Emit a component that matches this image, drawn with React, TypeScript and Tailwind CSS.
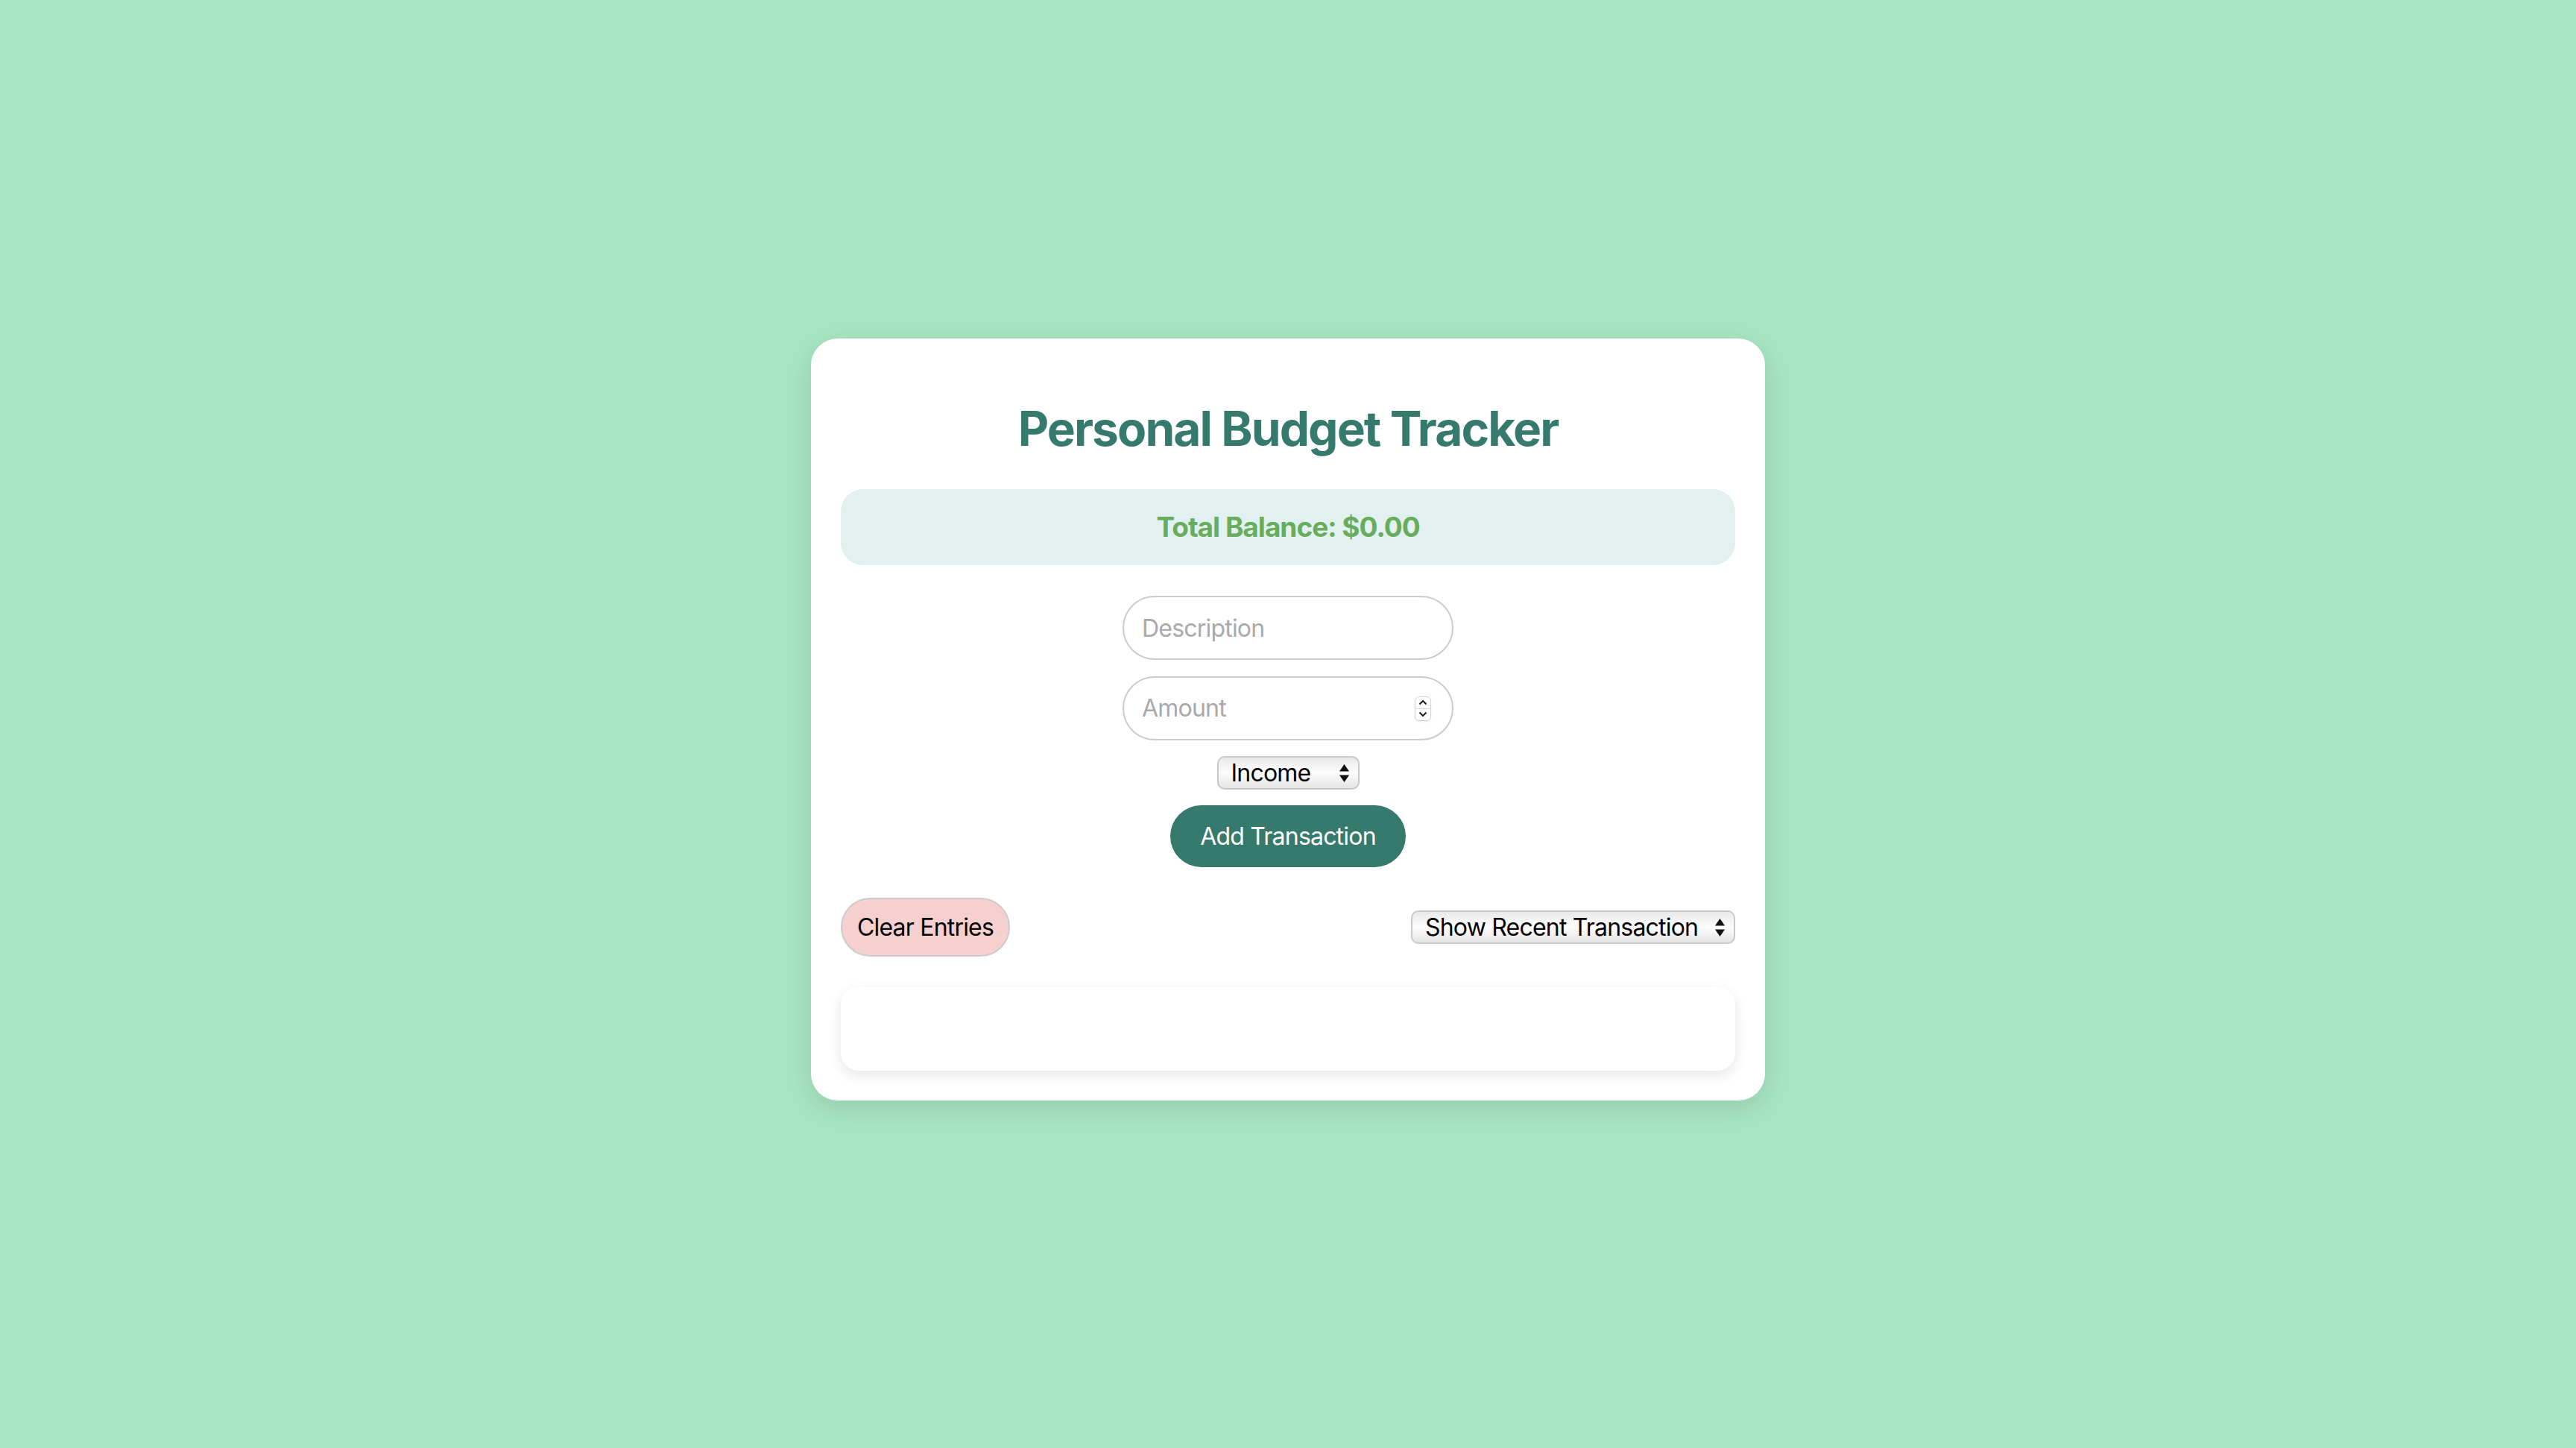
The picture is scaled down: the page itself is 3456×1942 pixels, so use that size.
import React, { useState } from 'react';

const font = { fontFamily: 'Inter, "Noto Sans", sans-serif' };

const SelectArrows: React.FC = () => (
  <svg width="15" height="26" viewBox="0 0 15 26" className="shrink-0">
    <path d="M7.5 1 L14 10.5 H1 Z" fill="#111" />
    <path d="M7.5 25 L14 15.5 H1 Z" fill="#111" />
  </svg>
);

const FakeSelect: React.FC<{ value: string; className?: string }> = ({ value, className }) => (
  <div
    className={`flex h-[45px] items-center justify-between gap-[12px] rounded-[10px] border-2 border-[#c9c9c9] bg-gradient-to-b from-[#e9e9e9] via-[#fdfdfd] to-[#e4e4e4] pl-[17px] pr-[11px] text-[32px] leading-none text-black ${className ?? ''}`}
  >
    <span className="whitespace-nowrap">{value}</span>
    <SelectArrows />
  </div>
);

const Spinner: React.FC = () => (
  <div className="flex h-[33px] w-[22px] shrink-0 flex-col overflow-hidden rounded-[6px] border border-[#d4d4d4] bg-white shadow-[0_1px_2px_rgba(0,0,0,0.08)]">
    <div className="flex flex-1 items-center justify-center border-b border-[#dcdcdc]">
      <svg width="12" height="8" viewBox="0 0 12 8">
        <path d="M1.5 6.5 L6 2 L10.5 6.5" fill="none" stroke="#222" strokeWidth="2.2" />
      </svg>
    </div>
    <div className="flex flex-1 items-center justify-center">
      <svg width="12" height="8" viewBox="0 0 12 8">
        <path d="M1.5 1.5 L6 6 L10.5 1.5" fill="none" stroke="#222" strokeWidth="2.2" />
      </svg>
    </div>
  </div>
);

export default function App() {
  const [description, setDescription] = useState('');
  const [amount, setAmount] = useState('');

  return (
    <div
      className="flex h-screen w-full items-center justify-center bg-[#a8e6c2] pb-[12px] tracking-[-0.8px]"
      style={font}
    >
      <div className="flex w-[1280px] flex-col rounded-[36px] bg-white p-[40px] shadow-[0_10px_40px_rgba(0,0,0,0.12)]">
        <h1 className="mt-[42px] text-center text-[64px] font-bold leading-[78px] tracking-[-1.9px] text-[#357a6c]">
          Personal Budget Tracker
        </h1>

        <div className="mt-[42px] flex h-[102px] items-center justify-center rounded-[30px] bg-[#e2f0f0]">
          <h3 className="text-[37px] font-bold tracking-[-1px] text-[#67ad5d]">Total Balance: $0.00</h3>
        </div>

        <div className="mt-[41px] flex flex-col items-center">
          <input
            value={description}
            onChange={(e) => setDescription(e.target.value)}
            placeholder="Description"
            className="h-[86px] w-[444px] rounded-full border-2 border-[#cccccc] px-[24px] text-[32px] tracking-[-0.8px] text-black outline-none placeholder:text-[#a9a9a9]"
          />
          <div className="mt-[22px] flex h-[86px] w-[444px] items-center rounded-full border-2 border-[#cccccc] pl-[24px] pr-[28px]">
            <input
              type="text"
              inputMode="decimal"
              value={amount}
              onChange={(e) => setAmount(e.target.value)}
              placeholder="Amount"
              className="min-w-0 flex-1 text-[32px] tracking-[-0.8px] text-black outline-none placeholder:text-[#a9a9a9]"
            />
            <Spinner />
          </div>
          <FakeSelect value="Income" className="mt-[21px] w-[191px]" />
          <button className="mt-[21px] h-[83px] w-[316px] rounded-full bg-[#357a6c] text-[32px] tracking-[-0.8px] text-white">
            Add Transaction
          </button>
        </div>

        <div className="mt-[41px] flex items-center justify-between">
          <button className="h-[79px] w-[227px] rounded-full border-2 border-[#cccccc] bg-[#f6cfcf] text-[32px] tracking-[-0.8px] text-black">
            Clear Entries
          </button>
          <FakeSelect value="Show Recent Transaction" className="w-[435px]" />
        </div>

        <div className="mt-[41px] h-[112px] rounded-[24px] bg-white shadow-[0_6px_18px_rgba(0,0,0,0.1)]" />
      </div>
    </div>
  );
}
